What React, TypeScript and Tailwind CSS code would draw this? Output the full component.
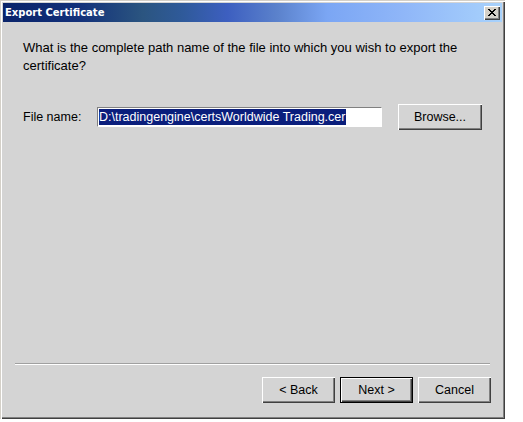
import React from "react";

const font = { fontFamily: '"Liberation Sans", Arial, sans-serif' };

const WinButton = ({ label, isDefault }: { label: string; isDefault?: boolean }) => (
  <button
    className={
      "w-[73px] h-[26px] bg-[#d4d4d4] text-[12.5px] text-black flex items-center justify-center " +
      (isDefault
        ? "border border-[#000] shadow-[inset_1px_1px_#fff,inset_-1px_-1px_#404040,inset_-2px_-2px_#808080]"
        : "shadow-[inset_1px_1px_#fff,inset_-1px_-1px_#404040,inset_-2px_-2px_#808080]")
    }
  >
    {label}
  </button>
);

export default function App() {
  return (
    <div className="min-h-screen w-screen bg-white" style={font}>
      <div className="w-[505px] h-[419px] bg-[#d4d4d4] p-[3px] flex flex-col shadow-[inset_1px_1px_#d4d0c8,inset_2px_2px_#fff,inset_-1px_-1px_#404040,inset_-2px_-2px_#808080]">
        {/* Title bar */}
        <div className="h-[19px] flex items-center justify-between pl-[2px] pr-[2px] bg-[linear-gradient(90deg,#0a246a_0%,#12307a_15%,#2b5580_28%,#2f5a9a_36%,#3d5fc0_45%,#5b82cc_55%,#7ba6f4_65%,#8fb6f8_80%,#a8d2fc_100%)]">
          <span className="text-white font-bold text-[10px] leading-none" style={{ fontFamily: '"DejaVu Sans", Tahoma, sans-serif' }}>
            Export Certificate
          </span>
          <div className="w-[16px] h-[14px] bg-[#d4d0c8] flex items-center justify-center shadow-[inset_1px_1px_#fff,inset_-1px_-1px_#404040,inset_-2px_-2px_#808080]">
            <svg width="8" height="7" viewBox="0 0 8 7" shapeRendering="crispEdges">
              <path d="M0 0h2v1h-2zM6 0h2v1h-2zM1 1h2v1h-2zM5 1h2v1h-2zM2 2h4v1h-4zM3 3h2v1h-2zM2 4h4v1h-4zM1 5h2v1h-2zM5 5h2v1h-2zM0 6h2v1h-2zM6 6h2v1h-2z" fill="#000" />
            </svg>
          </div>
        </div>

        {/* Body */}
        <div className="flex-1 flex flex-col">
          <div className="pl-[20px] pr-[20px] pt-[17px]">
            <p className="text-[13px] leading-[18px] text-black">
              What is the complete path name of the file into which you wish to export the certificate?
            </p>
            <div className="mt-[29px] flex items-center">
              <span className="text-[12.5px] text-black w-[74px]">File name:</span>
              <div className="w-[285px] h-[20px] bg-white border border-t-[#808080] border-l-[#808080] border-r-white border-b-white p-[1px] flex items-center">
                <span className="bg-[#0a1e7c] text-white text-[12.5px] leading-[16px] h-[16px] whitespace-nowrap pr-[1px]">
                  {"D:\\tradingengine\\certsWorldwide Trading.cer"}
                </span>
              </div>
              <div className="ml-[16px]">
                <button className="w-[84px] h-[26px] bg-[#d4d4d4] text-[12.5px] text-black flex items-center justify-center shadow-[inset_1px_1px_#fff,inset_-1px_-1px_#404040,inset_-2px_-2px_#808080]">
                  Browse...
                </button>
              </div>
            </div>
          </div>

          <div className="flex-1" />

          <div className="mx-[12px] border-t border-t-[#a0a0a0] border-b border-b-white" />

          <div className="flex justify-end gap-[5px] pr-[11px] pt-[12px] pb-[13px]">
            <WinButton label="< Back" />
            <WinButton label="Next >" isDefault />
            <WinButton label="Cancel" />
          </div>
        </div>
      </div>
    </div>
  );
}
